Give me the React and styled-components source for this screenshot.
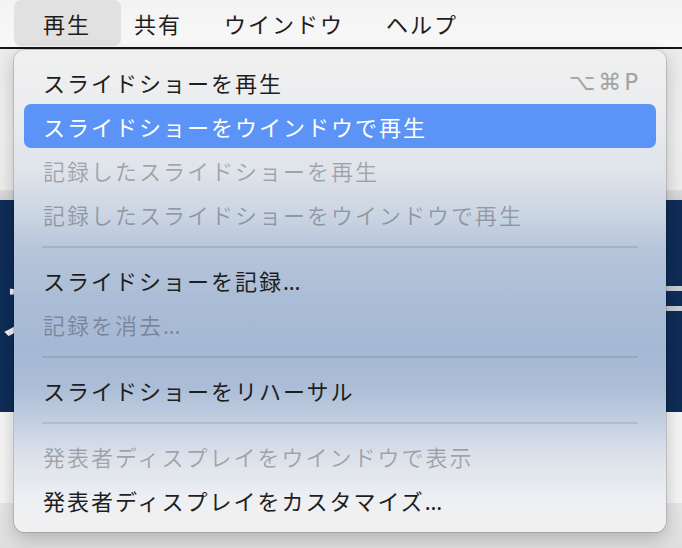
import React from 'react';
import styled, { createGlobalStyle } from 'styled-components';

const Global = createGlobalStyle`
  html, body { margin: 0; padding: 0; }
  body {
    width: 682px;
    height: 548px;
    overflow: hidden;
    background: #e3e3e3;
    font-family: "Noto Sans", "Noto Sans CJK JP", sans-serif;
  }
`;

const Screen = styled.div`
  position: relative;
  width: 682px;
  height: 548px;
  overflow: hidden;
  display: flex;
  flex-direction: column;
`;

const MenuBar = styled.div`
  flex: none;
  height: 47px;
  display: flex;
  align-items: stretch;
  padding-left: 14px;
  background: linear-gradient(#f3f3f3, #f8f8f8);
  border-bottom: 2px solid #151515;
`;

const Title = styled.div`
  display: flex;
  align-items: center;
  padding: ${p => (p.$active ? '0 30px 0 29px' : '0')};
  height: 46px;
  border-radius: 7px;
  background: ${p => (p.$active ? '#e1e1e1' : 'transparent')};
  font-size: 22px;
  letter-spacing: 2px;
  color: #1d1d1d;
`;

const TitleGroup = styled.div`
  display: flex;
  gap: 42px;
  margin-left: 13px;
`;

const Backdrop = styled.div`
  flex: 1;
  display: flex;
  flex-direction: column;
`;

const Toolbar = styled.div`
  height: 141px;
  background: linear-gradient(#ebebeb, #efefef 60%, #ececec);
`;

const ToolbarEdge = styled.div`
  height: 10px;
  background: linear-gradient(#dcdcdc, #d2d2d2);
`;

const Slide = styled.div`
  position: relative;
  height: 212px;
  background: #0e2c57;
  overflow: hidden;
`;

const SlideEdge = styled.div`
  position: absolute;
  left: 0;
  top: 0;
  width: 14px;
  height: 100%;
  overflow: hidden;
`;

const SlideGlyph = styled.span`
  position: absolute;
  left: -2px;
  top: 74px;
  font-size: 64px;
  line-height: 1;
  color: #f4f4f4;
  font-family: "Noto Sans CJK JP", sans-serif;
`;

const SlideBar = styled.div`
  position: absolute;
  right: 0;
  width: 40px;
  height: 5px;
  background: #c9ccd2;
`;

const Notes = styled.div`
  height: 91px;
  background: #f4f4f4;
`;

const Floor = styled.div`
  flex: 1;
  background: linear-gradient(#e6e6e6, #dedede);
`;

const Panel = styled.div`
  position: absolute;
  left: 14px;
  top: 50px;
  width: 652px;
  box-sizing: border-box;
  padding: 10px;
  border-radius: 11px;
  background: linear-gradient(
    #f0f0f0 0%,
    #ecedef 11%,
    #dfe4eb 25%,
    #cbd5e3 34%,
    #b8c6db 41%,
    #aabcd6 52%,
    #a6b9d4 62%,
    #abbdd7 70%,
    #c2cfe1 77%,
    #dbe1ea 84%,
    #edeff2 93%,
    #f1f1f1 100%
  );
  box-shadow: 0 0 0 1px rgba(0, 0, 0, 0.13), 0 6px 18px rgba(0, 0, 0, 0.22);
`;

const Item = styled.div`
  height: 44px;
  display: flex;
  align-items: center;
  justify-content: space-between;
  padding: 0 18px 0 19px;
  border-radius: 7px;
  font-size: 22px;
  letter-spacing: 2px;
  white-space: nowrap;
  background: ${p => (p.$active ? '#5b94f6' : 'transparent')};
  color: ${p => (p.$active ? '#ffffff' : p.$disabled ? 'rgba(0, 0, 0, 0.28)' : '#1e1e1e')};
`;

const Shortcut = styled.span`
  font-family: "DejaVu Sans", sans-serif;
  font-size: 23px;
  letter-spacing: 3px;
  margin-right: -3px;
  color: #a3a3a3;
`;

const Separator = styled.div`
  height: 2px;
  margin: 10px 18px;
  background: rgba(0, 0, 0, 0.1);
`;

const entries = [
  { label: 'スライドショーを再生', shortcut: '⌥⌘P' },
  { label: 'スライドショーをウインドウで再生', active: true },
  { label: '記録したスライドショーを再生', disabled: true },
  { label: '記録したスライドショーをウインドウで再生', disabled: true },
  { sep: true },
  { label: 'スライドショーを記録…' },
  { label: '記録を消去…', disabled: true },
  { sep: true },
  { label: 'スライドショーをリハーサル' },
  { sep: true },
  { label: '発表者ディスプレイをウインドウで表示', disabled: true },
  { label: '発表者ディスプレイをカスタマイズ…' },
];

export default function App() {
  return (
    <>
      <Global />
      <Screen>
        <MenuBar>
          <Title $active>再生</Title>
          <TitleGroup>
            <Title>共有</Title>
            <Title>ウインドウ</Title>
            <Title>ヘルプ</Title>
          </TitleGroup>
        </MenuBar>
        <Backdrop>
          <Toolbar />
          <ToolbarEdge />
          <Slide>
            <SlideEdge>
              <SlideGlyph>ス</SlideGlyph>
            </SlideEdge>
            <SlideBar style={{ top: 86 }} />
            <SlideBar style={{ top: 106 }} />
          </Slide>
          <Notes />
          <Floor />
        </Backdrop>
        <Panel>
          {entries.map((e, i) =>
            e.sep ? (
              <Separator key={i} />
            ) : (
              <Item key={i} $active={e.active} $disabled={e.disabled}>
                <span>{e.label}</span>
                {e.shortcut && <Shortcut>{e.shortcut}</Shortcut>}
              </Item>
            )
          )}
        </Panel>
      </Screen>
    </>
  );
}
